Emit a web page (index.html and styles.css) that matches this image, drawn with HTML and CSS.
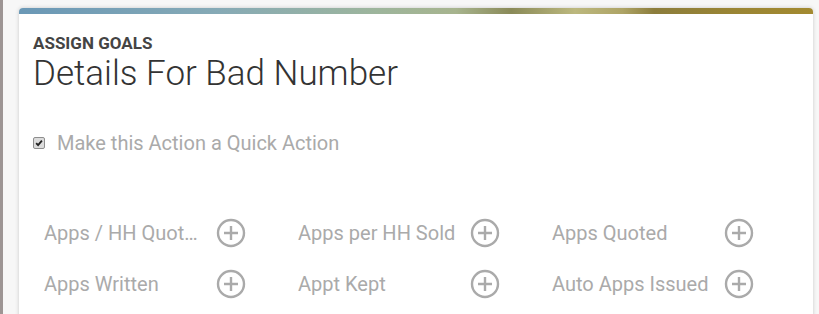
FILE: index.html
```html
<!DOCTYPE html>
<html>
<head>
<meta charset="utf-8">
<link rel="stylesheet" href="styles.css">
</head>
<body>
<div class="page">
  <div class="card">
    <div class="topbar"></div>
    <div class="content">
      <div class="eyebrow">ASSIGN GOALS</div>
      <h1 class="title">Details For Bad Number</h1>
      <label class="quick"><span class="box"><svg viewBox="0 0 12 12"><path d="M2.6 6.2l2.3 2.4 4.6-5.4"/></svg></span><span>Make this Action a Quick Action</span></label>
      <div class="goals">
        <div class="goal"><span class="name">Apps / HH Quoted</span><svg class="plus" viewBox="0 0 30 30"><circle cx="15" cy="15" r="13" /><path d="M15 8v14M8 15h14"/></svg></div>
        <div class="goal"><span class="name">Apps per HH Sold</span><svg class="plus" viewBox="0 0 30 30"><circle cx="15" cy="15" r="13" /><path d="M15 8v14M8 15h14"/></svg></div>
        <div class="goal"><span class="name">Apps Quoted</span><svg class="plus" viewBox="0 0 30 30"><circle cx="15" cy="15" r="13" /><path d="M15 8v14M8 15h14"/></svg></div>
        <div class="goal"><span class="name">Apps Written</span><svg class="plus" viewBox="0 0 30 30"><circle cx="15" cy="15" r="13" /><path d="M15 8v14M8 15h14"/></svg></div>
        <div class="goal"><span class="name">Appt Kept</span><svg class="plus" viewBox="0 0 30 30"><circle cx="15" cy="15" r="13" /><path d="M15 8v14M8 15h14"/></svg></div>
        <div class="goal"><span class="name">Auto Apps Issued</span><svg class="plus" viewBox="0 0 30 30"><circle cx="15" cy="15" r="13" /><path d="M15 8v14M8 15h14"/></svg></div>
      </div>
    </div>
  </div>
</div>
</body>
</html>
```
FILE: styles.css
```css
html, body {
  margin: 0;
  padding: 0;
  height: 100%;
  overflow: hidden;
}
body {
  background: #f7f7f7;
  font-family: Roboto, "Liberation Sans", sans-serif;
  border-left: 3px solid #9d9594;
  box-sizing: border-box;
}
.page {
  padding: 8px 6px 0 16px;
}
.card {
  background: #fff;
  border-radius: 4px 4px 0 0;
  box-shadow: 0 0 4px rgba(0,0,0,0.18);
  height: 330px;
  overflow: hidden;
}
.topbar {
  height: 6px;
  background: linear-gradient(90deg, #6a98b6 0%, #86aab6 25%, #9db59c 45%, #a7b48e 55%, #8a8a58 62%, #bcb87e 70%, #aea466 76%, #8c7d3c 80%, #9a8534 90%, #a38a30 100%);
}
.content {
  padding: 19px 14px 0 14px;
}
.eyebrow {
  font-size: 17px;
  font-weight: 700;
  color: #444;
  line-height: 20px;
}
.title {
  margin: 1px 0 0 0;
  font-size: 35px;
  font-weight: 300;
  color: #333;
  line-height: 40px;
}
.quick {
  display: flex;
  align-items: center;
  margin-top: 37px;
  font-size: 20px;
  color: #aaa;
  line-height: 24px;
}
.box {
  width: 12px;
  height: 12px;
  box-sizing: border-box;
  border: 1px solid #8e8e8e;
  border-radius: 2px;
  background: #dcdcdc;
  margin-right: 12px;
  display: flex;
  flex: none;
}
.box svg {
  width: 10px;
  height: 10px;
  fill: none;
  stroke: #222;
  stroke-width: 2.2;
}
.goals {
  margin-top: 63px;
  padding-left: 11px;
  display: grid;
  grid-template-columns: repeat(3, 254px);
  row-gap: 21px;
}
.goal {
  display: flex;
  align-items: center;
  height: 30px;
}
.name {
  width: 172px;
  flex: none;
  font-size: 20px;
  color: #aaa;
  white-space: nowrap;
  overflow: hidden;
  text-overflow: ellipsis;
  padding-right: 11px;
  box-sizing: border-box;
}
.plus {
  width: 30px;
  height: 30px;
  flex: none;
  fill: none;
  stroke: #aaa;
  stroke-width: 2.4;
}
```
